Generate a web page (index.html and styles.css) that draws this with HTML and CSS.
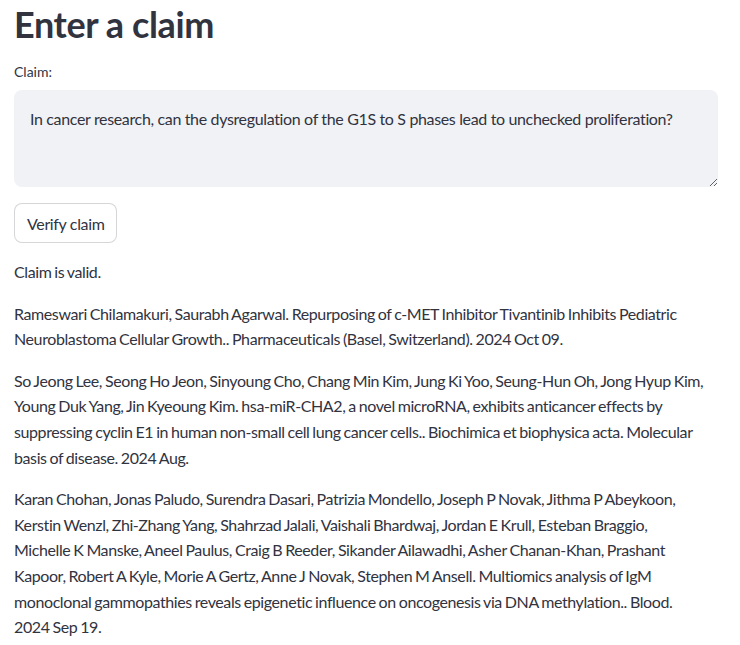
FILE: index.html
```html
<!DOCTYPE html>
<html>
<head>
<meta charset="utf-8">
<link rel="stylesheet" href="styles.css">
</head>
<body>
<main class="main">
  <h1 class="title">Enter a claim</h1>
  <label class="label" for="claim">Claim:</label>
  <textarea id="claim" class="claim-input">In cancer research, can the dysregulation of the G1S to S phases lead to unchecked proliferation?</textarea>
  <button class="btn">Verify claim</button>
  <p class="para">Claim is valid.</p>
  <p class="para">Rameswari Chilamakuri, Saurabh Agarwal. Repurposing of c-MET Inhibitor Tivantinib Inhibits Pediatric Neuroblastoma Cellular Growth.. Pharmaceuticals (Basel, Switzerland). 2024 Oct 09.</p>
  <p class="para">So Jeong Lee, Seong Ho Jeon, Sinyoung Cho, Chang Min Kim, Jung Ki Yoo, Seung-Hun Oh, Jong Hyup Kim, Young Duk Yang, Jin Kyeoung Kim. hsa-miR-CHA2, a novel microRNA, exhibits anticancer effects by suppressing cyclin E1 in human non-small cell lung cancer cells.. Biochimica et biophysica acta. Molecular basis of disease. 2024 Aug.</p>
  <p class="para">Karan Chohan, Jonas Paludo, Surendra Dasari, Patrizia Mondello, Joseph P Novak, Jithma P Abeykoon, Kerstin Wenzl, Zhi-Zhang Yang, Shahrzad Jalali, Vaishali Bhardwaj, Jordan E Krull, Esteban Braggio, Michelle K Manske, Aneel Paulus, Craig B Reeder, Sikander Ailawadhi, Asher Chanan-Khan, Prashant Kapoor, Robert A Kyle, Morie A Gertz, Anne J Novak, Stephen M Ansell. Multiomics analysis of IgM monoclonal gammopathies reveals epigenetic influence on oncogenesis via DNA methylation.. Blood. 2024 Sep 19.</p>
</main>
</body>
</html>
```
FILE: styles.css
```css
* { box-sizing: border-box; }
body {
  margin: 0;
  background: #ffffff;
  color: #31333f;
  font-family: "Lato", "Open Sans", sans-serif;
}
.main {
  display: flex;
  flex-direction: column;
  align-items: flex-start;
  padding: 0 22px 0 14px;
}
.title {
  margin: 0 0 14px;
  font-size: 36px;
  font-weight: 700;
  line-height: 48px;
  letter-spacing: -0.4px;
}
.label {
  font-size: 14px;
  line-height: 20px;
  margin-bottom: 8px;
}
.claim-input {
  width: 704px;
  height: 97px;
  background: #f0f2f6;
  border: none;
  border-radius: 8px;
  padding: 16px 16px;
  font-family: inherit;
  font-size: 16px;
  line-height: 25px;
  color: #31333f;
  letter-spacing: -0.35px;
  resize: vertical;
  outline: none;
}
.btn {
  margin-top: 16px;
  height: 40px;
  padding: 0 12px;
  background: #fff;
  border: 1px solid rgba(49, 51, 63, 0.2);
  border-radius: 8px;
  font-family: inherit;
  font-size: 16px;
  color: #31333f;
  letter-spacing: -0.35px;
}
.para {
  margin: 16px 0 0;
  font-size: 16px;
  line-height: 25.6px;
  letter-spacing: -0.4px;
  word-spacing: -0.8px;
  width: 691px;
}
```
